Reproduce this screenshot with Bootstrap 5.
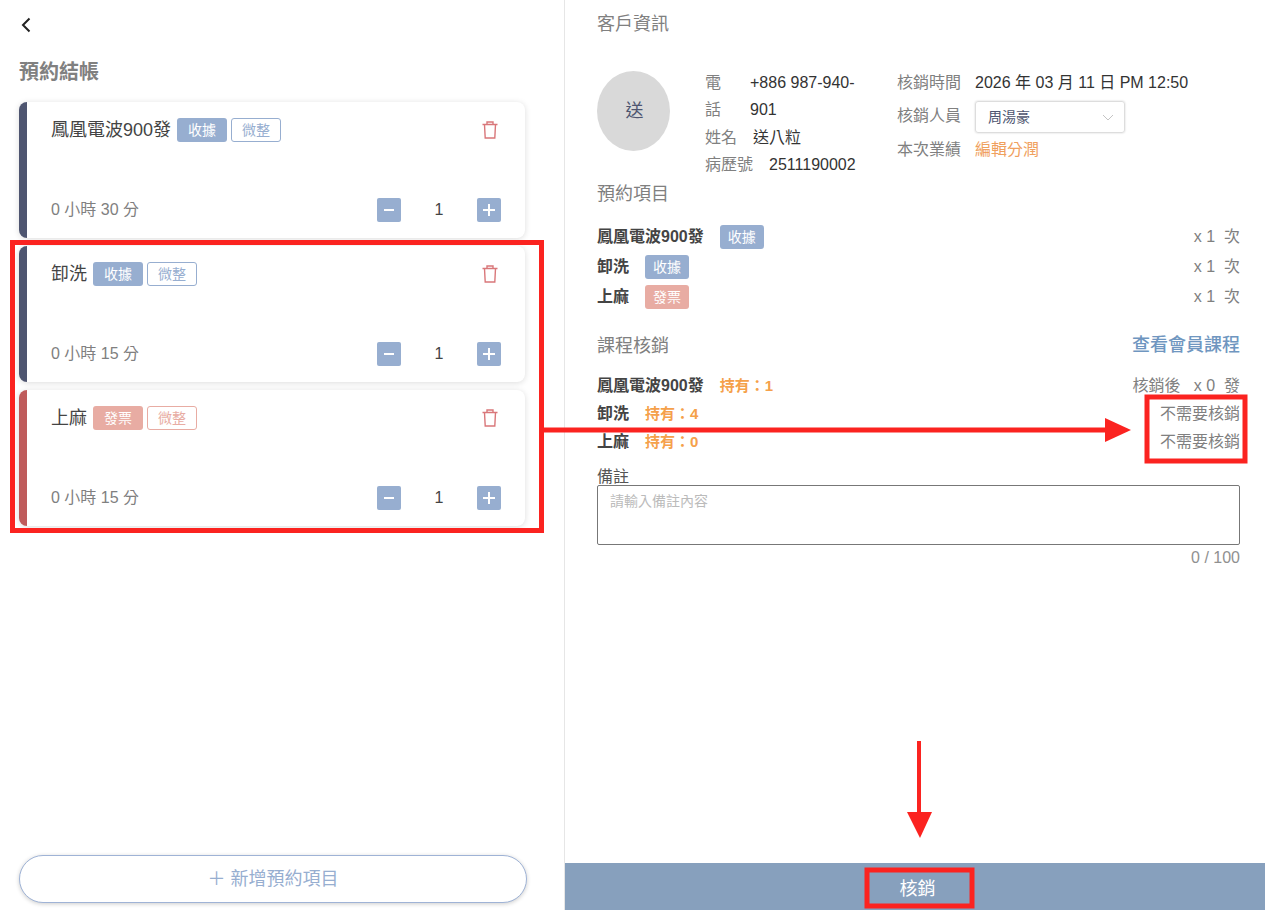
<!DOCTYPE html>
<html lang="zh-Hant">

<head>
  <meta charset="UTF-8" />
  <meta name="viewport" content="width=device-width, initial-scale=1.0" />
  <title>預約結帳</title>
  <link href="https://cdn.jsdelivr.net/npm/bootstrap@5.3.3/dist/css/bootstrap.min.css" rel="stylesheet" />
  <style>
    body { font-family: "Liberation Sans", "Noto Sans CJK TC", sans-serif; color: #444; height: 910px; overflow: hidden; position: relative; }
    .left-pane { width: 565px; height: 910px; padding: 0 38px 7px 19px; border-right: 1px solid #e6e6e6; }
    .back-link { display: block; height: 18px; margin: 16px 0 0 1px; line-height: 0; }
    .page-title { font-size: 20px; line-height: 28px; font-weight: 700; color: #808080; margin: 24px 0 16px; }
    .item-card { height: 136px; width: 506px; margin-bottom: 8px; padding: 16px 24px; border: 0; border-left: 8px solid #4e5570; border-radius: 8px; box-shadow: 0 1px 6px rgba(0, 0, 0, .14); justify-content: space-between; }
    .item-card.red { border-left-color: #bf5b5b; }
    .item-name { font-size: 18px; line-height: 24px; color: #444; margin-right: 6px; }
    .tag { width: 50px; height: 24px; padding: 0; font-size: 14px; line-height: 22px; font-weight: 400; border-radius: 3px; border: 1px solid transparent; }
    .item-tag { width: 44px; }
    .tag-blue { background: #97aed0; color: #fff; }
    .tag-red { background: #e8aca3; color: #fff; }
    .tag-blue-line { background: #fff; color: #97aed0; border-color: #97aed0; margin-left: 4px; }
    .tag-red-line { background: #fff; color: #e8aca3; border-color: #e8aca3; margin-left: 4px; }
    .trash-icon { margin: 3px 3px 0 0; }
    .duration { font-size: 16px; color: #808080; }
    .step-btn { width: 24px; height: 24px; padding: 0; border: 0; border-radius: 2px; background: #97aed0; line-height: 0; }
    .step-num { width: 76px; text-align: center; font-size: 16px; color: #444; }
    .add-btn { width: 508px; height: 48px; padding: 0; border: 1px solid #9fb3d6; border-radius: 24px; background: #fff; color: #97aed0; font-size: 18px; box-shadow: 0 1px 4px rgba(0, 0, 0, .2); }
    .add-btn:hover { color: #97aed0; border-color: #9fb3d6; }
    .right-pane { width: 700px; height: 910px; }
    .right-body { padding: 13px 25px 0 32px; }
    .sec-label { font-size: 18px; line-height: 22px; color: #808080; }
    .avatar-blob { width: 73px; height: 80px; padding-left: 2px; border-radius: 50%; background: #d9d9d9; color: #4e5570; font-size: 18px; }
    .info-block { margin-top: 36px; height: 112px; }
    .info-col { width: 152px; margin: -2px 0 0 35px; font-size: 16px; line-height: 27.4px; }
    .info-label { color: #808080; margin-right: 16px; }
    .info-label.narrow { width: 29px; flex: none; }
    .info-value { color: #333; }
    .info-side { margin-left: 40px; font-size: 16px; line-height: 24px; }
    .side-row { display: flex; align-items: center; }
    .side-label { width: 78px; color: #808080; flex: none; }
    .perf-row { margin-top: 5px; }
    .staff-pick { width: 150px; height: 32px; padding: 0 10px 0 12px; border: 1px solid #ddd; border-radius: 3px; box-shadow: 0 0 2px rgba(0, 0, 0, .2); font-size: 14px; color: #4e5570; margin-top: 6px; }
    .edit-link { color: #f0a05e; text-decoration: none; }
    .item-list { margin-top: 17px; }
    .item-row { height: 30px; font-size: 16px; }
    .item-row b { color: #444; margin-right: 16px; font-weight: 700; }
    .times { color: #808080; font-size: 16px; }
    .course-head { margin: 20px 0 13px; }
    .course-link { font-size: 18px; line-height: 27px; color: #6f96c0; font-weight: 500; text-decoration: none; }
    .course-row { height: 28px; font-size: 16px; }
    .course-row b { color: #444; margin-right: 16px; font-weight: 700; }
    .held { color: #f5a04a; font-size: 15px; font-weight: 700; }
    .remark-label { font-size: 16px; line-height: 17px; color: #555; margin-top: 12px; }
    .remark-box { display: block; width: 643px; height: 60px; padding: 5px 12px; border: 1px solid #777; border-radius: 2px; font-size: 14px; resize: none; }
    .remark-box::placeholder { color: #bbb; }
    .char-count { font-size: 16px; color: #909090; text-align: right; line-height: 26px; }
    .submit-bar { height: 47px; width: 700px; border: 0; border-radius: 0; background: #87a0bd; color: #fff; font-size: 18px; padding: 6px 0 0 5px; }
    .submit-bar:hover { background: #87a0bd; color: #fff; }
    .mark-layer { position: absolute; left: 0; top: 0; pointer-events: none; }
  </style>
</head>

<body>
  <div class="d-flex">
    <div class="left-pane d-flex flex-column">
      <a class="back-link" href="#">
        <svg width="12" height="18" viewBox="0 0 12 18" fill="none"><path d="M9.5 2.5 3 9l6.5 6.5" stroke="#222" stroke-width="2"/></svg>
      </a>
      <div class="page-title">預約結帳</div>

      <div class="card item-card">
        <div class="d-flex align-items-start">
          <span class="item-name">鳳凰電波900發</span>
          <span class="badge tag tag-blue">收據</span>
          <span class="badge tag tag-blue-line">微整</span>
          <svg class="trash-icon ms-auto" width="16" height="18" viewBox="0 0 16 18" fill="none" stroke="#d9777a" stroke-width="1.4"><path d="M0.5 3.5h15M5 3.5V1h6v2.5M2.5 3.5 3.2 17h9.6l.7-13.5"/></svg>
        </div>
        <div class="d-flex align-items-center">
          <span class="duration me-auto">0 小時 30 分</span>
          <button class="btn step-btn"><svg width="12" height="12" viewBox="0 0 12 12"><path d="M1 6h10" stroke="#fff" stroke-width="2"/></svg></button>
          <span class="step-num">1</span>
          <button class="btn step-btn"><svg width="12" height="12" viewBox="0 0 12 12"><path d="M0 6h12M6 0v12" stroke="#fff" stroke-width="2"/></svg></button>
        </div>
      </div>

      <div class="card item-card">
        <div class="d-flex align-items-start">
          <span class="item-name">卸洗</span>
          <span class="badge tag tag-blue">收據</span>
          <span class="badge tag tag-blue-line">微整</span>
          <svg class="trash-icon ms-auto" width="16" height="18" viewBox="0 0 16 18" fill="none" stroke="#d9777a" stroke-width="1.4"><path d="M0.5 3.5h15M5 3.5V1h6v2.5M2.5 3.5 3.2 17h9.6l.7-13.5"/></svg>
        </div>
        <div class="d-flex align-items-center">
          <span class="duration me-auto">0 小時 15 分</span>
          <button class="btn step-btn"><svg width="12" height="12" viewBox="0 0 12 12"><path d="M1 6h10" stroke="#fff" stroke-width="2"/></svg></button>
          <span class="step-num">1</span>
          <button class="btn step-btn"><svg width="12" height="12" viewBox="0 0 12 12"><path d="M0 6h12M6 0v12" stroke="#fff" stroke-width="2"/></svg></button>
        </div>
      </div>

      <div class="card item-card red">
        <div class="d-flex align-items-start">
          <span class="item-name">上麻</span>
          <span class="badge tag tag-red">發票</span>
          <span class="badge tag tag-red-line">微整</span>
          <svg class="trash-icon ms-auto" width="16" height="18" viewBox="0 0 16 18" fill="none" stroke="#d9777a" stroke-width="1.4"><path d="M0.5 3.5h15M5 3.5V1h6v2.5M2.5 3.5 3.2 17h9.6l.7-13.5"/></svg>
        </div>
        <div class="d-flex align-items-center">
          <span class="duration me-auto">0 小時 15 分</span>
          <button class="btn step-btn"><svg width="12" height="12" viewBox="0 0 12 12"><path d="M1 6h10" stroke="#fff" stroke-width="2"/></svg></button>
          <span class="step-num">1</span>
          <button class="btn step-btn"><svg width="12" height="12" viewBox="0 0 12 12"><path d="M0 6h12M6 0v12" stroke="#fff" stroke-width="2"/></svg></button>
        </div>
      </div>

      <button class="btn add-btn mt-auto">＋ 新增預約項目</button>
    </div>

    <div class="right-pane d-flex flex-column">
      <div class="right-body flex-grow-1">
        <div class="sec-label">客戶資訊</div>

        <div class="d-flex info-block">
          <div class="avatar-blob d-flex align-items-center justify-content-center flex-shrink-0">送</div>
          <div class="info-col">
            <div class="d-flex"><span class="info-label narrow">電話</span><span class="info-value">+886 987-940-901</span></div>
            <div class="d-flex"><span class="info-label">姓名</span><span class="info-value">送八粒</span></div>
            <div class="d-flex"><span class="info-label">病歷號</span><span class="info-value">2511190002</span></div>
          </div>
          <div class="info-side">
            <div class="side-row"><span class="side-label">核銷時間</span><span class="info-value">2026 年 03 月 11 日 PM 12:50</span></div>
            <div class="side-row">
              <span class="side-label mt-1">核銷人員</span>
              <div class="staff-pick d-flex align-items-center justify-content-between">
                周湯豪
                <svg width="12" height="7" viewBox="0 0 12 7" fill="none"><path d="M1 1l5 5 5-5" stroke="#c4c4c4"/></svg>
              </div>
            </div>
            <div class="side-row perf-row"><span class="side-label">本次業績</span><a class="edit-link" href="#">編輯分潤</a></div>
          </div>
        </div>

        <div class="sec-label">預約項目</div>
        <div class="item-list">
          <div class="item-row d-flex align-items-center"><b>鳳凰電波900發</b><span class="badge tag tag-blue item-tag">收據</span><span class="times ms-auto">x 1 &nbsp;次</span></div>
          <div class="item-row d-flex align-items-center"><b>卸洗</b><span class="badge tag tag-blue item-tag">收據</span><span class="times ms-auto">x 1 &nbsp;次</span></div>
          <div class="item-row d-flex align-items-center"><b>上麻</b><span class="badge tag tag-red item-tag">發票</span><span class="times ms-auto">x 1 &nbsp;次</span></div>
        </div>

        <div class="d-flex justify-content-between align-items-center course-head">
          <span class="sec-label">課程核銷</span>
          <a class="course-link" href="#">查看會員課程</a>
        </div>
        <div>
          <div class="course-row d-flex align-items-center"><b>鳳凰電波900發</b><span class="held">持有：1</span><span class="times ms-auto">核銷後 &nbsp;&nbsp;x 0 &nbsp;發</span></div>
          <div class="course-row d-flex align-items-center"><b>卸洗</b><span class="held">持有：4</span><span class="times ms-auto">不需要核銷</span></div>
          <div class="course-row d-flex align-items-center"><b>上麻</b><span class="held">持有：0</span><span class="times ms-auto">不需要核銷</span></div>
        </div>

        <div class="remark-label">備註</div>
        <textarea class="form-control remark-box" placeholder="請輸入備註內容"></textarea>
        <div class="char-count">0 / 100</div>
      </div>
      <button class="btn submit-bar">核銷</button>
    </div>
  </div>

  <svg class="mark-layer" width="1265" height="910" fill="none">
    <rect x="12.5" y="242.5" width="529" height="288" stroke="#fb2320" stroke-width="5"/>
    <path d="M544 430H1106" stroke="#fb2320" stroke-width="5"/>
    <path d="M1105 418l26 12-26 12z" fill="#fb2320"/>
    <rect x="1147" y="397" width="98" height="64" stroke="#fb2320" stroke-width="5"/>
    <path d="M919 741V815" stroke="#fb2320" stroke-width="4"/>
    <path d="M907 812h25l-12 26z" fill="#fb2320"/>
    <rect x="867" y="870" width="105" height="36" stroke="#fb2320" stroke-width="5"/>
  </svg>
</body>

</html>
